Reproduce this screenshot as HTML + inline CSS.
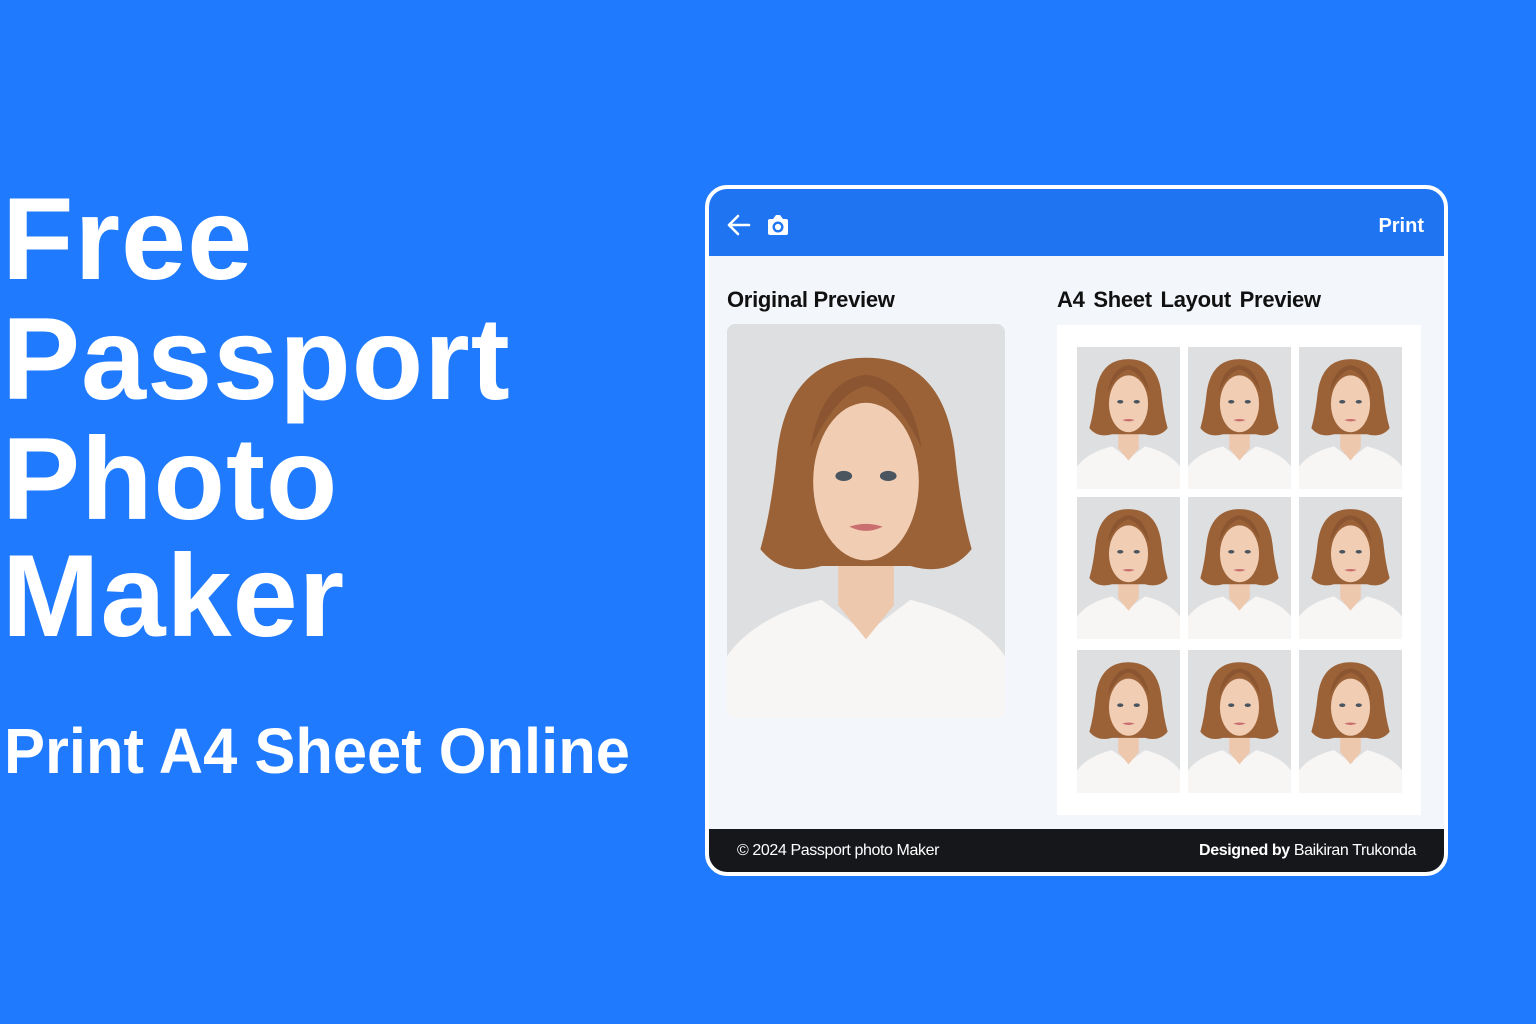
<!DOCTYPE html>
<html><head><meta charset="utf-8"><style>
*{margin:0;padding:0;box-sizing:border-box}
body{width:1536px;height:1024px;background:#1f7afe;font-family:"Liberation Sans",Arial,sans-serif;position:relative;overflow:hidden}
.t{position:absolute;left:2px;color:#fff;font-weight:bold;font-size:117px;letter-spacing:1px;line-height:1}
.sub{position:absolute;left:4px;top:714px;color:#fff;font-size:64px;font-weight:bold;transform:scaleX(0.96);transform-origin:left top;white-space:nowrap}
.card{position:absolute;left:705px;top:185px;width:743px;height:691px;border:4px solid #fff;border-radius:22px;background:#f3f6fb;overflow:hidden}
.hd{position:absolute;left:0;top:0;right:0;height:67px;background:#1f74f2}
.ft{position:absolute;left:0;bottom:0;right:0;height:43px;background:#16171b;color:#fff;font-size:16px}
.lbl{position:absolute;font-size:22px;font-weight:bold;color:#111;letter-spacing:-0.3px}
.ph{position:absolute}
</style></head><body>
<svg width="0" height="0" style="position:absolute">
<defs>
<symbol id="p" viewBox="0 0 100 140" preserveAspectRatio="none">
<rect width="100" height="140" fill="#dedfe1"/>
<path d="M0 140 L0 118 Q10 104 34 98 L50 110 L66 98 Q90 104 100 118 L100 140Z" fill="#f7f6f4"/>
<path d="M40 84 L40 100 L50 112 L60 100 L60 84Z" fill="#eec8ad"/>
<path d="M50 12 Q22 12 18 46 Q16 66 12 80 Q20 90 34 86 L66 86 Q80 90 88 80 Q84 66 82 46 Q78 12 50 12Z" fill="#9b6238"/>
<ellipse cx="50" cy="56" rx="19" ry="28" fill="#f1cdb3"/>
<path d="M30 44 Q40 24 50 22 Q60 24 70 44 Q66 20 50 18 Q34 20 30 44Z" fill="#8a5530"/>
<ellipse cx="42" cy="54" rx="3" ry="1.8" fill="#4a5560"/>
<ellipse cx="58" cy="54" rx="3" ry="1.8" fill="#4a5560"/>
<path d="M44 72 Q50 75 56 72 Q50 70 44 72Z" fill="#c96f6f"/>
</symbol>
</defs></svg>
<div class="t" style="top:180px">Free</div>
<div class="t" style="top:300px">Passport</div>
<div class="t" style="top:420px">Photo</div>
<div class="t" style="top:537px">Maker</div>
<div class="sub">Print A4 Sheet Online</div>
<div class="card">
 <div class="hd">
  <svg style="position:absolute;left:16px;top:24px" width="28" height="24" viewBox="0 0 28 24"><path d="M24 12H4M13 3L4 12L13 21" stroke="#fff" stroke-width="2.6" fill="none" stroke-linecap="round" stroke-linejoin="round"/></svg>
  <svg style="position:absolute;left:56px;top:24px" width="26" height="24" viewBox="0 0 26 24"><path d="M3 8 Q3 6 5 6 H8 L11 2 H15 L18 6 H21 Q23 6 23 8 V20 Q23 22 21 22 H5 Q3 22 3 20Z" fill="#fff"/><circle cx="13" cy="14" r="4.3" fill="none" stroke="#1f74f2" stroke-width="2.4"/></svg>
  <div style="position:absolute;right:20px;top:26px;color:#fff;font-weight:bold;font-size:20px">Print</div>
 </div>
 <div class="lbl" style="left:18px;top:98px">Original Preview</div>
 <div class="lbl" style="left:348px;top:98px;word-spacing:3px">A4 Sheet Layout Preview</div>
 <svg class="ph" style="left:18px;top:135px;border-radius:8px" width="278" height="394"><use href="#p" width="278" height="394"/></svg>
 <div style="position:absolute;left:348px;top:136px;width:364px;height:490px;background:#fff"></div>
 <svg class="ph" style="left:368px;top:158px" width="326" height="450">
  <use href="#p" x="0" y="0" width="103" height="142"/><use href="#p" x="111" y="0" width="103" height="142"/><use href="#p" x="222" y="0" width="103" height="142"/>
  <use href="#p" x="0" y="150" width="103" height="142"/><use href="#p" x="111" y="150" width="103" height="142"/><use href="#p" x="222" y="150" width="103" height="142"/>
  <use href="#p" x="0" y="303" width="103" height="143"/><use href="#p" x="111" y="303" width="103" height="143"/><use href="#p" x="222" y="303" width="103" height="143"/>
 </svg>
 <div class="ft">
  <div style="position:absolute;left:28px;top:13px;letter-spacing:-0.4px">© 2024 Passport photo Maker</div>
  <div style="position:absolute;right:28px;top:13px;letter-spacing:-0.4px"><b>Designed by</b> Baikiran Trukonda</div>
 </div>
</div>
</body></html>
